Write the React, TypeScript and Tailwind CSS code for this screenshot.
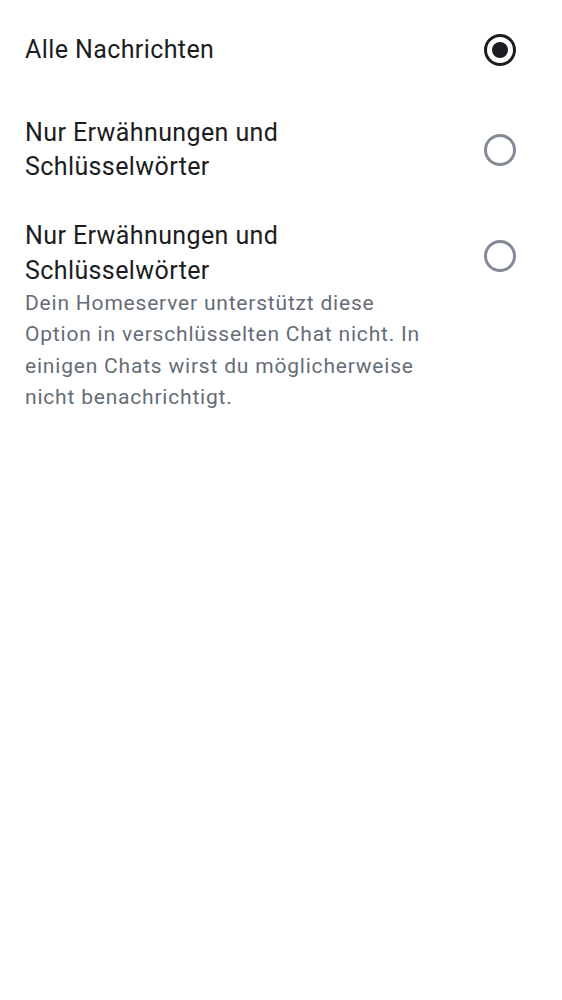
const font = { fontFamily: "Roboto, 'Noto Sans', sans-serif" };

type Option = {
  id: string;
  title: string;
  description?: string;
};

const options: Option[] = [
  { id: "all", title: "Alle Nachrichten" },
  { id: "mentions", title: "Nur Erwähnungen und Schlüsselwörter" },
  {
    id: "mentions-disabled",
    title: "Nur Erwähnungen und Schlüsselwörter",
    description:
      "Dein Homeserver unterstützt diese Option in verschlüsselten Chat nicht. In einigen Chats wirst du möglicherweise nicht benachrichtigt.",
  },
];

function Radio({ checked }: { checked: boolean }) {
  return (
    <svg width="32" height="32" viewBox="0 0 32 32" aria-hidden="true">
      <circle
        cx="16"
        cy="16"
        r="14.5"
        fill="none"
        stroke={checked ? "#1b1d22" : "#818a95"}
        strokeWidth="3"
      />
      {checked && <circle cx="16" cy="16" r="8" fill="#1b1d22" />}
    </svg>
  );
}

export default function App() {
  const selected = "all";

  return (
    <div className="min-h-[1000px] w-full bg-white" style={font}>
      {options.map((opt) => {
        const hasDesc = !!opt.description;
        return (
          <div
            key={opt.id}
            className={
              hasDesc
                ? "flex items-start pl-[25px] pr-[26px] pt-[19px]"
                : "flex items-center pl-[25px] pr-[26px] py-[14px]"
            }
          >
            <div className="mr-[40px] flex-1">
              <div className="text-[25px] leading-[34.5px] tracking-[0.4px] text-[#1b1d22]">
                {opt.title}
              </div>
              {hasDesc && (
                <div className="text-[21px] leading-[31.3px] tracking-[0.8px] text-[#656d77]">
                  {opt.description}
                </div>
              )}
            </div>
            <div
              className={
                hasDesc
                  ? "mt-[1px] flex h-[72px] w-[72px] items-center justify-center"
                  : "flex h-[72px] w-[72px] items-center justify-center"
              }
            >
              <Radio checked={opt.id === selected} />
            </div>
          </div>
        );
      })}
    </div>
  );
}
